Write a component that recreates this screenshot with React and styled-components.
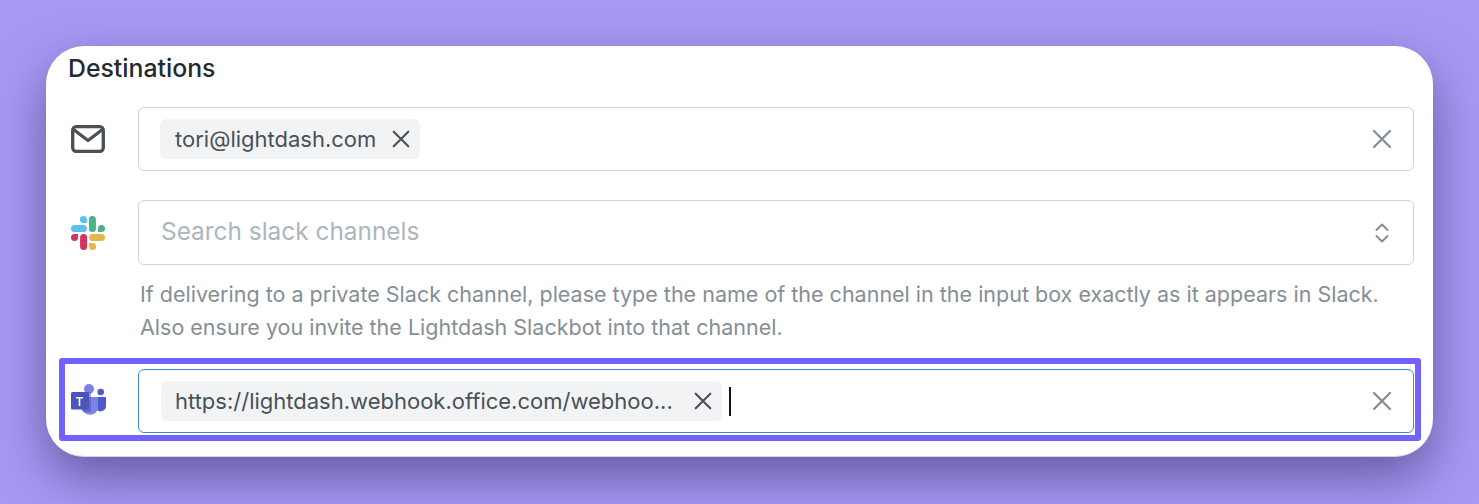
import React from 'react'
import styled, { createGlobalStyle } from 'styled-components'

const GlobalStyle = createGlobalStyle`
    html, body {
        margin: 0;
        padding: 0;
    }
    body {
        background: #a999f5;
        font-family: Inter, "Liberation Sans", sans-serif;
    }
`

const Page = styled.div`
    width: 1479px;
    height: 504px;
    padding: 46px;
    box-sizing: border-box;
    overflow: hidden;
    background: #a999f5;
`

const Card = styled.div`
    height: 411px;
    box-sizing: border-box;
    padding: 8px 19px 0 23px;
    background: #fff;
    border-radius: 38px;
    border-bottom: 1px solid #d4d5d8;
    box-shadow: 0 20px 52px 0 rgba(45, 35, 95, 0.55);
`

const Title = styled.h2`
    margin: 0 0 24px -1px;
    height: 29px;
    font-size: 24.800px;
    line-height: 29px;
    font-weight: 500;
    color: #25292e;
`

const Row = styled.div`
    position: relative;
    display: flex;
    align-items: center;
    height: ${p => p.height}px;
    margin-bottom: ${p => p.gap}px;
`

const IconSlot = styled.div`
    flex: 0 0 69px;
    height: 40px;
    display: flex;
    align-items: center;
    padding-left: 2px;
    box-sizing: border-box;
`

const Field = styled.div`
    flex: 1;
    height: 100%;
    box-sizing: border-box;
    display: flex;
    align-items: center;
    padding: 0 ${p => p.endInset || 20}px 0 ${p => p.inset || 21}px;
    border: 1px solid ${p => (p.focused ? '#3c8ae0' : '#ced4da')};
    border-radius: 6px;
    background: #fff;
`

const Chip = styled.div`
    display: flex;
    align-items: center;
    height: 40px;
    box-sizing: border-box;
    padding: 0 9px 0 ${p => p.start || 15}px;
    gap: 15px;
    background: #f1f3f5;
    border-radius: 6px;
    font-size: 22px;
    color: #495057;
    white-space: nowrap;
`

const ChipLabel = styled.span`
    display: block;
    min-width: ${p => p.minWidth || 0};
`

const Caret = styled.span`
    width: 2px;
    height: 29px;
    margin-left: 7px;
    background: #111;
`

const Placeholder = styled.span`
    padding-bottom: 3px;
    font-size: 24.400px;
    color: #adb5bd;
`

const Spacer = styled.div`
    flex: 1;
`

const Help = styled.p`
    margin: 13px 0 26px 71px;
    font-size: 21.500px;
    line-height: 32.500px;
    color: #868e96;
    white-space: nowrap;
`

const Highlight = styled.div`
    position: absolute;
    left: -10px;
    right: -7px;
    top: -11px;
    bottom: -8px;
    border: 6px solid #7262fb;
    border-radius: 3px;
    pointer-events: none;
`

const CrossIcon = ({ size = 22, color = '#495057' }) => (
    <svg width={size} height={size} viewBox="0 0 22 22" fill="none" stroke={color} strokeWidth="2.300" strokeLinecap="round">
        <path d="M3 3l16 16M19 3L3 19" />
    </svg>
)

const MailIcon = () => (
    <svg width="34" height="28" viewBox="0 0 34 28" fill="none" stroke="#495057" strokeWidth="3.300" strokeLinejoin="round" strokeLinecap="round">
        <rect x="1.700" y="1.700" width="30.600" height="24.600" rx="3.500" />
        <path d="M2.500 4.500L17 15.500 31.500 4.500" />
    </svg>
)

const ChevronsIcon = () => (
    <svg width="14" height="20" viewBox="0 0 14 20" fill="none" stroke="#868e96" strokeWidth="2" strokeLinecap="round" strokeLinejoin="round">
        <path d="M1.500 7L7 1.500 12.500 7M1.500 13L7 18.500 12.500 13" />
    </svg>
)

const SlackIcon = () => (
    <svg width="34" height="34" viewBox="0 0 54 54">
        <path fill="#5cc0ef" d="M19.700 0a5.600 5.600 0 0 0 0 11.200h5.600V5.600A5.600 5.600 0 0 0 19.700 0zm0 14.400H5.600a5.600 5.600 0 0 0 0 11.200h14.100a5.600 5.600 0 0 0 0-11.200z" />
        <path fill="#4fb28a" d="M54 20a5.600 5.600 0 0 0-11.200 0v5.600h5.600A5.600 5.600 0 0 0 54 20zm-14.400 0V5.600a5.600 5.600 0 0 0-11.200 0V20a5.600 5.600 0 0 0 11.200 0z" />
        <path fill="#e6b64d" d="M34.300 54a5.600 5.600 0 0 0 0-11.200h-5.600v5.600a5.600 5.600 0 0 0 5.600 5.600zm0-14.400h14.100a5.600 5.600 0 0 0 0-11.200H34.300a5.600 5.600 0 0 0 0 11.200z" />
        <path fill="#d1345f" d="M0 34a5.600 5.600 0 0 0 11.200 0v-5.600H5.600A5.600 5.600 0 0 0 0 34zm14.400 0v14.400a5.600 5.600 0 0 0 11.200 0V34a5.600 5.600 0 0 0-11.200 0z" />
    </svg>
)

const TeamsIcon = () => (
    <svg width="35" height="34" viewBox="0 0 35 34">
        <circle cx="29.700" cy="8" r="3.300" fill="#5059c9" />
        <path fill="#5059c9" d="M25 13h9a1 1 0 0 1 1 1v7.500a5.500 5.500 0 0 1-10 3.500z" />
        <circle cx="18" cy="5" r="5" fill="#7b83eb" />
        <path fill="#7b83eb" d="M11 13h15a1 1 0 0 1 1 1v11a8.500 8.500 0 0 1-16 0z" />
        <path fill="#4c51a8" opacity=".5" d="M10 8h8a2 2 0 0 1 2 2v18h-8A10 10 0 0 1 10 24z" />
        <rect x="0" y="8" width="18" height="17.500" rx="1.500" fill="#4b53bc" />
        <path fill="#fff" d="M5 13h7v1.500H9.300V22H7.700v-7.500H5z" />
    </svg>
)

function App() {
    return (
        <Page>
            <GlobalStyle />
            <Card>
                <Title>Destinations</Title>

                <Row height={64} gap={29}>
                    <IconSlot><MailIcon /></IconSlot>
                    <Field>
                        <Chip><ChipLabel>tori@lightdash.com</ChipLabel><CrossIcon size={20} /></Chip>
                        <Spacer />
                        <CrossIcon color="#868e96" />
                    </Field>
                </Row>

                <Row height={65} gap={0}>
                    <IconSlot><SlackIcon /></IconSlot>
                    <Field inset={22} endInset={24}>
                        <Placeholder>Search slack channels</Placeholder>
                        <Spacer />
                        <ChevronsIcon />
                    </Field>
                </Row>

                <Help>
                    If delivering to a private Slack channel, please type the name of the channel in the input box exactly as it appears in Slack.
                    <br />
                    Also ensure you invite the Lightdash Slackbot into that channel.
                </Help>

                <Row height={64} gap={0}>
                    <IconSlot><TeamsIcon /></IconSlot>
                    <Field focused inset={22}>
                        <Chip start={14}>
                            <ChipLabel minWidth="503px">https://lightdash.webhook.office.com/webhoo...</ChipLabel>
                            <CrossIcon size={20} />
                        </Chip>
                        <Caret />
                        <Spacer />
                        <CrossIcon color="#868e96" />
                    </Field>
                    <Highlight />
                </Row>
            </Card>
        </Page>
    )
}

export default App
